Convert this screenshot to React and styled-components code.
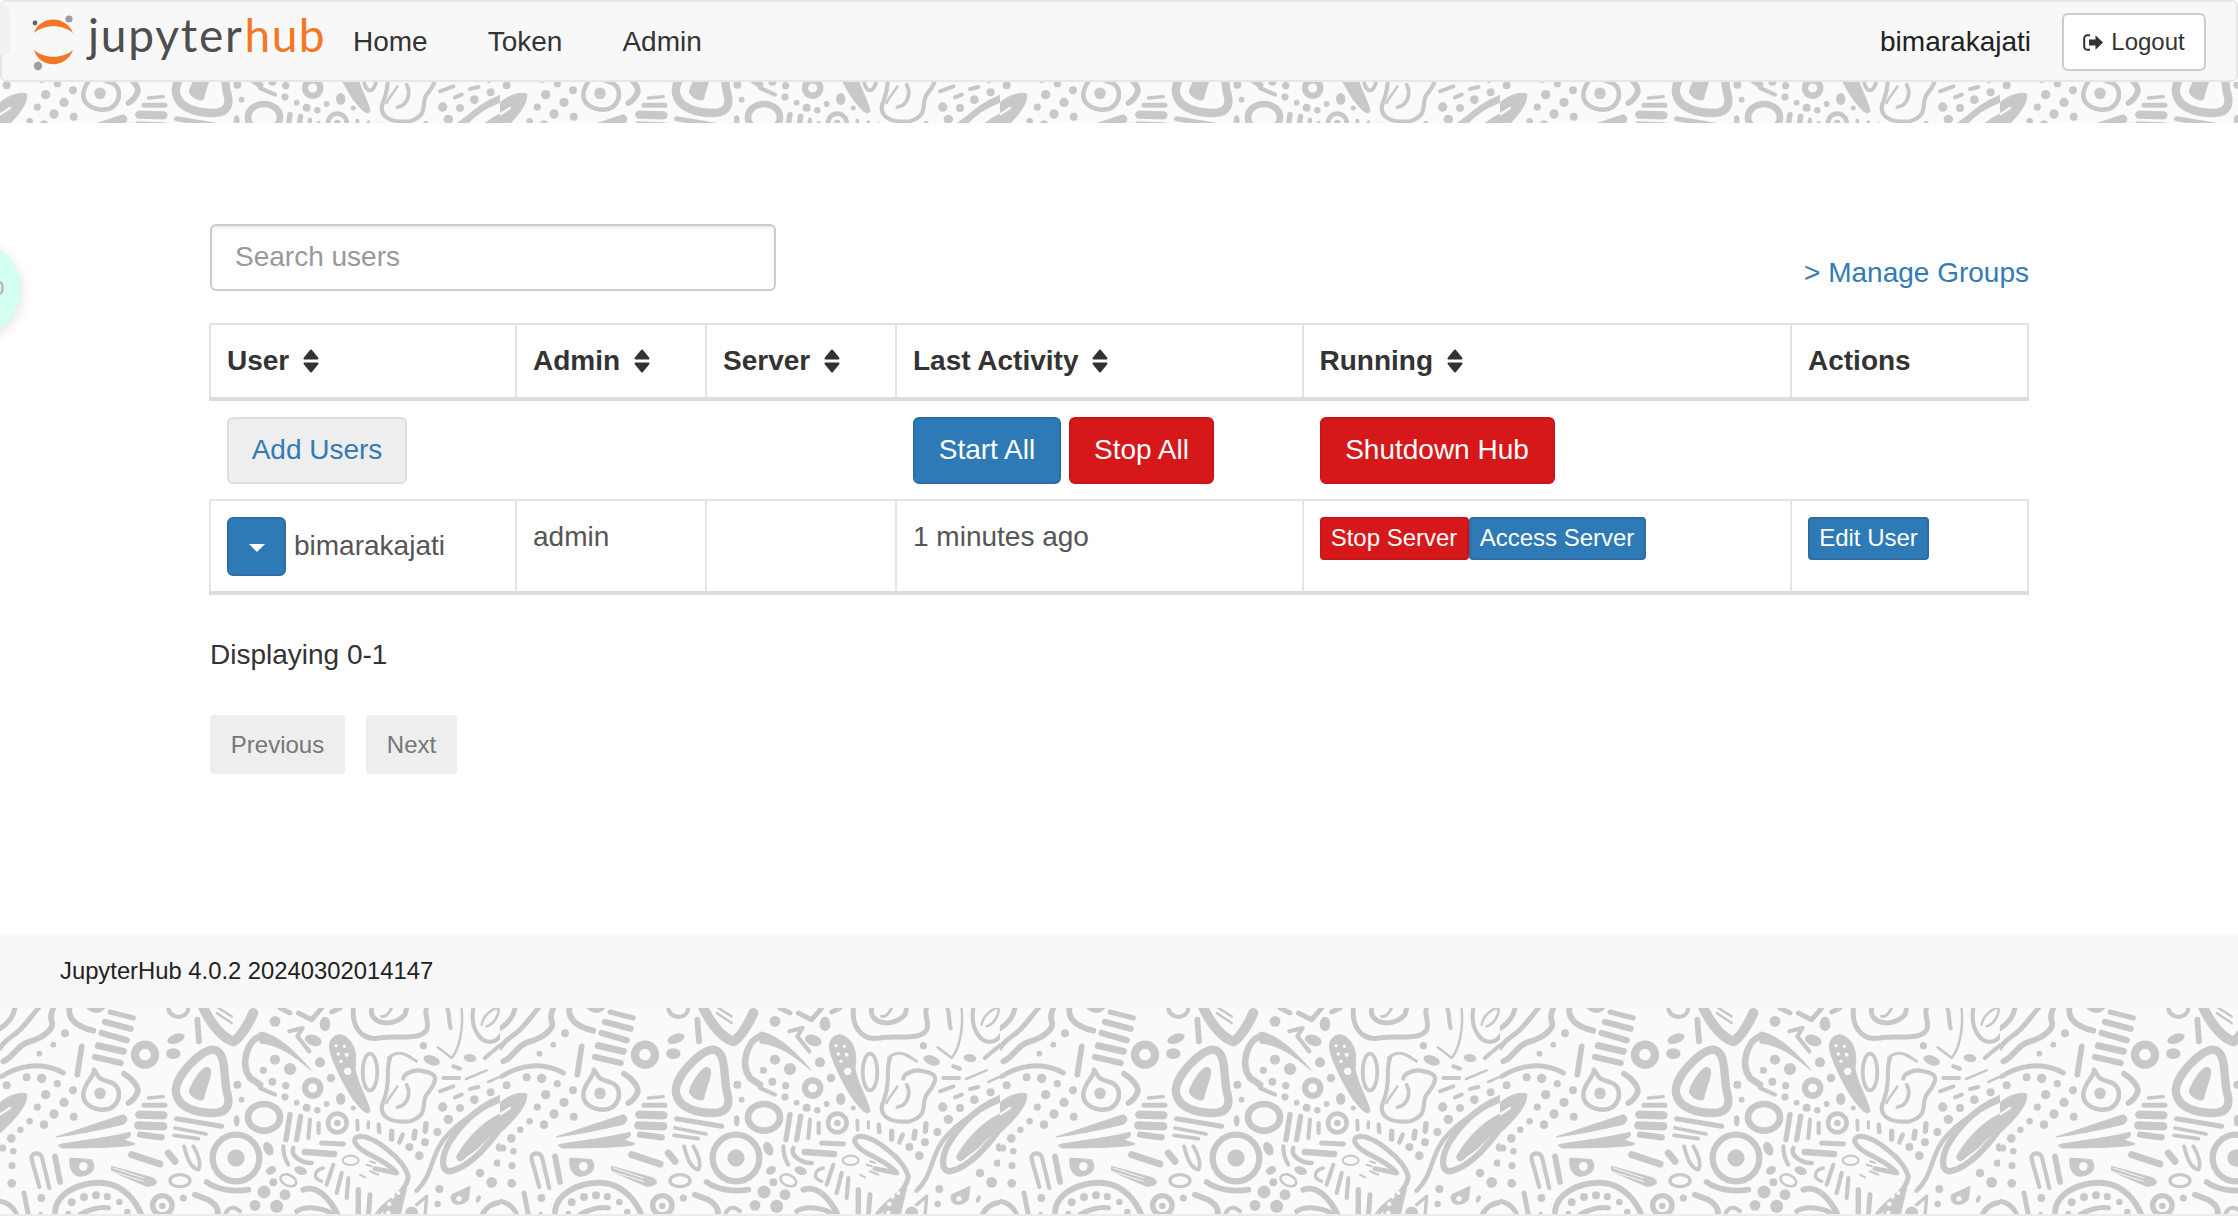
import React from "react";
import styled, { createGlobalStyle } from "styled-components";

const Global = createGlobalStyle`
  html, body { margin: 0; padding: 0; background: #fff; }
  body { font-family: "Liberation Sans", Arial, sans-serif; font-size: 28px; line-height: 39.2px; color: #333; overflow: hidden; }
  * { box-sizing: border-box; }
`;

const GRAY = "#c8c8c6";
const PAPER = "#fbfaf8";
const BOLD = 1.25;
const ROUND = 1.08;

/* ---- pattern tile data, in coordinates of a 3x view: [x1,y1,x2,y2,width] ---- */
const LINES_A = [
  [330,12,400,30,12],[315,42,392,62,15],[305,75,380,97,15],[295,113,370,130,17],[285,147,362,165,15],
  [592,35,597,100,14],[245,115,232,200,14],[445,270,490,266,8],[432,292,495,292,12],[418,320,490,322,20],
  [415,352,490,355,20],[420,380,485,388,15],[530,332,665,355,12],[525,360,618,378,9],[522,382,595,392,9],
  [165,445,180,522,14],[395,440,480,468,17],[505,435,525,460,17],[72,555,85,620,12],[650,15,695,45,6],[655,0,695,25,6],
];
const DOTS_A = [
  [195,76,11],[160,110,8],[118,137,8],[80,208,11],[125,211,13],[172,227,10],[20,232,11],[219,247,11],[137,260,13],
  [192,283,13],[112,297,10],[162,318,13],[221,326,11],[89,340,9],[132,350,12],[61,365,9],[34,391,12],[8,420,10],
  [40,430,9],[36,473,10],[35,526,12],[300,256,16],[712,230,11],[725,275,8],[708,450,24],[550,570,10],[487,594,9],
  [124,570,11],[122,618,6],[765,592,15],[215,583,11],[252,567,11],[288,562,11],[322,566,10],[358,582,9],[382,612,9],[205,617,8],
];
const RINGS_A = [
  [435,140,30,20],[708,450,70,15],[487,592,29,13],
];
const STROKES_A = [
  ["M-5 65C20 50 40 30 45 0",12],["M0 120C20 90 40 85 60 65C80 45 90 30 115 0",12],
  ["M10 160C40 150 50 110 90 100C130 90 165 60 155 40C150 20 155 10 160 0",14],
  ["M208 0C205 30 225 55 280 68",14],["M505 0C505 30 560 40 565 0",10],
  ["M780 85C740 100 720 170 750 210L780 230",16],
  ["M640 125C600 125 520 210 528 255C535 300 590 315 640 315C690 315 690 280 680 250C670 200 680 130 640 125Z",20],
  ["M5 205C60 170 130 160 190 195",12],
  ["M282 185C285 205 250 225 250 260C250 290 280 305 310 305C345 305 362 275 355 245C345 215 310 225 295 205Z",11],
  ["M372 197C395 210 420 240 412 255C405 270 395 280 385 285",14],
  ["M620 522C650 545 700 552 745 545",14],
  ["M118 537L95 455C90 435 115 430 125 445L148 540",10],
  ["M552 415C560 445 570 480 595 485C605 470 595 440 580 415",9],
  ["M0 580C30 585 50 610 50 624",12],
  ["M165 612C170 550 250 520 310 525C370 530 410 580 425 624",14],
  ["M235 624C260 605 300 595 325 600",12],
  ["M585 560L625 575C650 590 660 610 650 624",14],["M675 624C680 600 700 590 720 610",10],
  ["M610 0C640 60 670 90 700 100C720 90 745 50 760 15",24],
];
const FILLS_A = [
  "M260 0C275 15 300 20 315 0Z",
  "M620 178C600 180 570 235 568 250C570 270 610 285 612 270C615 240 650 180 620 178Z",
  "M0 285C20 265 60 250 80 258C85 290 40 340 0 375Z",
  "M168 387L370 320C385 325 385 345 365 350C300 365 230 380 168 387Z",
  "M175 412C180 405 300 395 390 373C395 380 390 390 370 395L405 407C410 415 300 420 185 420Z",
  "M210 450L275 455C290 480 280 500 240 505C220 505 205 480 210 450Z",
  "M335 475L460 510C480 525 465 535 440 535L335 490Z",
];
const ELLIPSES_A = [
  [528,92,25,13,-20],[520,137,20,15,0],[710,338,8,16,0],
];
const OPEN_ELLIPSES_A = [
  [540,518,30,18,8,0],
];
const HOLES_A = [
  ["M-5 322L30 300",7],["M335 490L430 520",3],["M340 480L430 510",3],
];
const HOLE_DOTS_A = [[250,475,13]];

const LINES_B = [
  [60,0,90,15,12],[215,12,240,0,12],[90,320,78,395,13],[122,325,110,395,13],[150,335,145,390,10],[176,345,176,375,10],
  [292,338,293,365,9],[325,342,325,360,8],[356,350,358,372,11],[395,370,395,393,13],[428,380,418,403,11],[465,370,462,390,13],
  [498,347,496,370,13],[580,175,600,182,10],[550,210,597,210,10],[618,213,680,187,6],[540,250,580,235,10],[685,222,775,180,6],
  [630,243,655,237,10],[585,268,605,260,10],[135,432,222,438,16],[185,405,250,408,12],
  [320,470,335,475,5],[330,460,345,465,5],[300,500,315,508,5],[330,490,355,500,5],[220,470,200,530,10],[245,495,230,555,10],
  [265,510,260,570,10],[295,545,295,624,13],[330,560,325,624,12],[0,240,45,260,10],
];
const DOTS_B = [
  [45,40,15],[45,155,14],[90,183,17],[180,163,14],[10,187,10],[37,221,11],[77,233,10],[75,267,10],[213,210,12],[110,284,8],
  [140,299,11],[172,307,9],[200,288,8],[280,300,7],[232,345,9],[532,372,11],[495,403,11],[448,417,11],[478,443,12],[490,113,10],
  [643,275,12],[692,253,11],[740,232,12],[548,297,13],[600,300,11],[565,334,13],[755,390,12],[720,418,12],[712,465,10],[757,475,10],
  [660,495,12],[695,523,15],[755,525,12],[40,523,11],[12,552,18],[75,560,15],[50,595,18],[538,543,11],[533,588,9],[455,615,18],[385,492,4],
];
const RINGS_B = [[158,240,23,15],[232,345,28,11]];
const STROKES_B = [
  ["M115 15L155 35L185 0",12],["M88 70L128 60L112 85L148 130",10],
  ["M280 0C275 50 300 100 360 90C410 80 480 100 500 65C510 40 490 20 500 0",12],
  ["M335 0C325 50 400 60 435 20L440 0",12],["M365 25C380 30 390 10 395 0",7],
  ["M562 0C570 20 565 40 572 60",10],["M605 0C610 60 600 120 575 150L533 118",6],
  ["M640 0C630 60 660 110 700 100C730 90 745 40 755 0",10],["M665 50C670 20 700 0 715 0C720 20 700 50 680 55",6],
  ["M675 150C700 125 730 110 780 60",10],["M730 162C750 150 770 140 780 130",10],
  ["M385 150C420 120 445 145 470 160",7],
  ["M390 150C375 190 395 220 370 280C350 330 400 345 450 340C510 320 480 290 500 260C540 210 530 195 490 190C460 180 430 200 430 212",10],
  ["M440 230C455 260 440 295 412 297",9],["M412 235C400 255 385 270 380 285",6],
  ["M780 255C700 265 620 320 570 400C545 440 540 490 570 490C620 480 690 420 760 300",15],
  ["M470 548C510 510 510 470 535 420C560 370 640 300 780 255",11],
  ["M70 415C70 440 75 455 85 470",10],["M100 420C90 440 120 465 155 465",11],["M190 480C165 485 155 510 185 520",8],
  ["M130 545C170 530 210 570 235 624",14],["M110 610C140 590 200 600 225 624",12],
  ["M350 624C360 590 440 560 445 505C430 450 340 385 300 385C270 390 285 415 320 435C360 455 400 480 410 495L345 482",12],
  ["M470 590L500 565L495 624",8],["M665 624C690 570 760 570 780 624",13],
];
const FILLS_B = [
  "M0 72C40 75 100 120 152 186C110 150 60 110 0 105Z",
  "M240 80C270 85 295 120 285 180C290 220 330 290 330 310C320 325 300 300 280 275C250 230 210 150 208 115C210 90 225 80 240 80Z",
  "M730 315C680 330 620 390 590 445C590 465 610 460 620 445C660 420 710 370 735 320Z",
  "M370 624C370 590 390 560 440 540L420 624Z",
  "M630 535L575 560C565 590 600 600 625 575Z",
];
const ELLIPSES_B = [
  [195,48,15,20,0],[160,97,24,15,20],[242,273,13,17,0],[515,157,24,13,20],[630,150,18,11,10],[25,422,13,20,-25],[33,487,15,11,-30],
  [122,488,18,11,20],[655,573,6,11,20],
];
const OPEN_ELLIPSES_B = [
  [12,328,48,40,16,0],[330,192,22,55,9,0],[272,457,24,14,5,0],[85,517,25,16,6,25],
];
const HOLE_DOTS_B = [[228,113,5],[253,115,5],[235,138,5],[260,140,6],[243,160,5],[263,190,11],[398,565,7],[388,588,7],[415,555,6],[385,615,7],[597,572,8]];

function TileGroup({ lines, dots, rings, strokes, fills, ellipses, openEllipses, holes = [], holeDots = [], dx = 0 }) {
  return (
    <g transform={`translate(${dx} 0)`}>
      {fills.map((d, i) => <path key={i} d={d} fill={GRAY} stroke={GRAY} strokeWidth="3" strokeLinejoin="round" />)}
      {strokes.map(([d, w], i) => <path key={i} d={d} fill="none" stroke={GRAY} strokeWidth={w * BOLD} strokeLinecap="round" strokeLinejoin="round" />)}
      {lines.map(([a, b, c, e, w], i) => <line key={i} x1={a} y1={b} x2={c} y2={e} stroke={GRAY} strokeWidth={w * BOLD} strokeLinecap="round" />)}
      {dots.map(([x, y, r], i) => <circle key={i} cx={x} cy={y} r={r * ROUND} fill={GRAY} />)}
      {rings.map(([x, y, r, w], i) => <circle key={i} cx={x} cy={y} r={r} fill="none" stroke={GRAY} strokeWidth={w * BOLD} />)}
      {ellipses.map(([x, y, a, b, t], i) => <ellipse key={i} cx={x} cy={y} rx={a * ROUND} ry={b * ROUND} fill={GRAY} transform={`rotate(${t} ${x} ${y})`} />)}
      {openEllipses.map(([x, y, a, b, w, t], i) => <ellipse key={i} cx={x} cy={y} rx={a} ry={b} fill="none" stroke={GRAY} strokeWidth={w * BOLD} transform={`rotate(${t} ${x} ${y})`} />)}
      {holes.map(([d, w], i) => <path key={i} d={d} fill="none" stroke={PAPER} strokeWidth={w} strokeLinecap="round" />)}
      {holeDots.map(([x, y, r], i) => <circle key={i} cx={x} cy={y} r={r} fill={PAPER} />)}
    </g>
  );
}

const BandBox = styled.div`
  height: ${(p) => p.$h}px;
  flex: none;
  background: ${PAPER};
  overflow: hidden;
`;
const BandSvg = styled.svg`
  display: block;
  width: 100%;
  height: 100%;
`;

function Band({ id, h, start }) {
  return (
    <BandBox $h={h}>
      <BandSvg aria-hidden="true">
        <defs>
          <pattern id={id} patternUnits="userSpaceOnUse" width="500" height="500" y={-start}>
            <g transform="translate(0 8) scale(0.33333)">
              <TileGroup lines={LINES_A} dots={DOTS_A} rings={RINGS_A} strokes={STROKES_A} fills={FILLS_A} ellipses={ELLIPSES_A} openEllipses={OPEN_ELLIPSES_A} holes={HOLES_A} holeDots={HOLE_DOTS_A} />
              <TileGroup dx={780} lines={LINES_B} dots={DOTS_B} rings={RINGS_B} strokes={STROKES_B} fills={FILLS_B} ellipses={ELLIPSES_B} openEllipses={OPEN_ELLIPSES_B} holeDots={HOLE_DOTS_B} />
            </g>
          </pattern>
        </defs>
        <rect width="100%" height="100%" fill={`url(#${id})`} />
      </BandSvg>
    </BandBox>
  );
}

const Page = styled.div`
  position: relative;
  display: flex;
  flex-direction: column;
  height: 1216px;
  overflow: hidden;
`;

const Navbar = styled.nav`
  flex: none;
  height: 82px;
  display: flex;
  align-items: center;
  background: #f8f8f8;
  border: 2px solid #e7e7e7;
  border-radius: 6px;
  padding: 2px 30px 0 0;
`;
const SideTab = styled.div`
  position: absolute;
  left: 0;
  top: 5px;
  width: 10px;
  height: 50px;
  background: #f1f1f1;
  border-radius: 0 6px 6px 0;
`;
const Brand = styled.a`
  display: flex;
  align-items: center;
  width: 321px;
  flex: none;
  height: 76px;
`;
const LogoMark = styled.svg`
  width: 80px;
  height: 76px;
  flex: none;
`;
const LogoText = styled.span`
  font-family: Lato, "Open Sans", sans-serif;
  font-size: 46px;
  line-height: 46px;
  letter-spacing: 1.8px;
  margin: -15px 0 0 6px;
  color: #4e4e4e;
  white-space: nowrap;
`;
const LogoHub = styled.span`
  color: #f37726;
  letter-spacing: 1.4px;
  margin-left: 1px;
`;
const NavList = styled.div`
  display: flex;
  flex: 1;
  align-items: center;
  padding-left: 30px;
  gap: 60px;
`;
const NavLink = styled.a`
  color: #333;
`;
const UserName = styled.span`
  color: #222;
  margin-right: 31px;
`;
const LogoutButton = styled.button`
  display: flex;
  align-items: center;
  justify-content: center;
  gap: 8px;
  width: 144px;
  height: 58px;
  padding: 0;
  background: #fff;
  border: 2px solid #ccc;
  border-radius: 6px;
  color: #333;
  font: 24px "Liberation Sans", Arial, sans-serif;
`;

const Main = styled.main`
  flex: 1;
  padding: 101px 209px 0 210px;
  background: #fff;
`;
const TopRow = styled.div`
  display: flex;
  justify-content: space-between;
  align-items: flex-end;
`;
const SearchInput = styled.input`
  width: 566px;
  height: 67px;
  padding: 0 23px 2px;
  border: 2px solid #ccc;
  border-radius: 6px;
  box-shadow: inset 0 2px 2px rgba(0,0,0,0.075);
  font: 28px "Liberation Sans", Arial, sans-serif;
  color: #555;
  outline: none;
  &::placeholder { color: #999; opacity: 1; }
`;
const TextLink = styled.a`
  color: #337ab7;
  margin-bottom: -1px;
`;
const Table = styled.table`
  width: 1818px;
  margin: 32px 0 0 -1px;
  border-collapse: collapse;
  table-layout: fixed;
  border: 2px solid #ddd;
  border-bottom-width: 4px;
`;
const Col = styled.col`
  width: ${(p) => p.$w}px;
`;
const Th = styled.th`
  height: 74.5px;
  padding: 0 16px;
  text-align: left;
  vertical-align: middle;
  border: 2px solid #e2e2e2;
  border-bottom: 4px solid #ddd;
  color: #333;
  font-weight: 700;
`;
const ThInner = styled.span`
  display: flex;
  align-items: center;
  gap: 14px;
`;
const Td = styled.td`
  padding: 16px 16px 15px;
  vertical-align: top;
  border: 2px solid #e5e5e5;
  color: #555;
`;
const ActionTd = styled(Td)`
  border-left-color: transparent;
  border-right-color: transparent;
`;
const BtnRow = styled.div`
  display: flex;
  gap: ${(p) => p.$gap || 0}px;
`;
const UserCell = styled.div`
  display: flex;
  align-items: center;
  gap: 8px;
`;
const Btn = styled.button`
  display: inline-flex;
  align-items: center;
  justify-content: center;
  flex: none;
  width: ${(p) => p.$w}px;
  height: ${(p) => (p.$xs ? 43 : p.$h || 67)}px;
  padding: 0;
  border-radius: ${(p) => (p.$xs ? 4 : 6)}px;
  border: 2px solid ${(p) => ({ blue: "#2e6da4", red: "#c9151a", gray: "#dedede" }[p.$kind])};
  background: ${(p) => ({ blue: "#2e7ab6", red: "#d7181b", gray: "#eeeeee" }[p.$kind])};
  color: ${(p) => (p.$kind === "gray" ? "#337ab7" : "#fff")};
  font: ${(p) => (p.$xs ? 24 : 28)}px "Liberation Sans", Arial, sans-serif;
`;
const Caret = styled.span`
  width: 0;
  height: 0;
  margin-top: 4px;
  border-left: 8px solid transparent;
  border-right: 8px solid transparent;
  border-top: 8px solid #fff;
`;
const Displaying = styled.p`
  margin: 40px 0 41px;
  color: #333;
`;
const Pager = styled.div`
  display: flex;
  gap: 21px;
`;
const PageBtn = styled.span`
  display: flex;
  align-items: center;
  justify-content: center;
  width: ${(p) => p.$w}px;
  height: 59px;
  background: #eee;
  border-radius: 4px;
  color: #777;
  font-size: 24px;
`;
const Footer = styled.footer`
  flex: none;
  height: 74px;
  display: flex;
  align-items: center;
  padding-left: 60px;
  background: #f7f7f7;
  color: #222;
  font-size: 23.8px;
`;
const BottomLine = styled.div`
  flex: none;
  height: 2px;
  background: #ececec;
`;
const Bubble = styled.div`
  position: absolute;
  left: -76px;
  top: 240px;
  width: 97px;
  height: 97px;
  border-radius: 50%;
  background: #d3fff0;
  box-shadow: 0 4px 14px rgba(0,0,0,0.12);
  display: flex;
  align-items: center;
  justify-content: flex-end;
  padding-right: 17px;
  color: #aaa;
  font-size: 20px;
`;

const SortIcon = () => (
  <svg width="16" height="24" viewBox="0 0 16 24" aria-hidden="true">
    <path d="M8 1.5L14.5 9.5H1.5Z M1.5 14.5H14.5L8 22.5Z" fill="#333" stroke="#333" strokeWidth="2" strokeLinejoin="round" />
  </svg>
);
const LogoutIcon = () => (
  <svg width="20" height="17" viewBox="0 0 20 17" aria-hidden="true">
    <path d="M7 1.2H4.5A3.2 3.2 0 0 0 1.2 4.5v8a3.2 3.2 0 0 0 3.3 3.3H7" fill="none" stroke="#333" strokeWidth="2" />
    <path d="M6 5.5h6.5V1.2L20 8.5l-7.5 7.3v-4.3H6z" fill="#333" />
  </svg>
);

export default function App() {
  return (
    <Page>
      <Global />
      <Navbar>
        <Brand>
          <LogoMark viewBox="0 0 80 76" aria-hidden="true">
            <path d="M32 29C38 11 64 11 71 29C61 20 42 20 32 29Z" fill="#f37726" />
            <path d="M32 46C42 55 61 55 71 46C64 65 38 65 32 46Z" fill="#f37726" />
            <circle cx="67" cy="15" r="3.6" fill="#9e9e9e" />
            <circle cx="33" cy="19" r="2.4" fill="#616262" />
            <circle cx="36" cy="62" r="4.2" fill="#9e9e9e" />
          </LogoMark>
          <LogoText>jupyter<LogoHub>hub</LogoHub></LogoText>
        </Brand>
        <NavList>
          <NavLink>Home</NavLink>
          <NavLink>Token</NavLink>
          <NavLink>Admin</NavLink>
        </NavList>
        <UserName>bimarakajati</UserName>
        <LogoutButton><LogoutIcon />Logout</LogoutButton>
      </Navbar>
      <SideTab />
      <Band id="band-top" h={41} start={82} />
      <Main>
        <TopRow>
          <SearchInput placeholder="Search users" readOnly />
          <TextLink>&gt; Manage Groups</TextLink>
        </TopRow>
        <Table>
          <colgroup>
            <Col $w={306} /><Col $w={190} /><Col $w={190} /><Col $w={406.5} /><Col $w={488.5} /><Col $w={237} />
          </colgroup>
          <thead>
            <tr>
              <Th><ThInner>User <SortIcon /></ThInner></Th>
              <Th><ThInner>Admin <SortIcon /></ThInner></Th>
              <Th><ThInner>Server <SortIcon /></ThInner></Th>
              <Th><ThInner>Last Activity <SortIcon /></ThInner></Th>
              <Th><ThInner>Running <SortIcon /></ThInner></Th>
              <Th>Actions</Th>
            </tr>
          </thead>
          <tbody>
            <tr>
              <ActionTd><Btn $kind="gray" $w={180}>Add Users</Btn></ActionTd>
              <ActionTd />
              <ActionTd />
              <ActionTd>
                <BtnRow $gap={8}>
                  <Btn $kind="blue" $w={148}>Start All</Btn>
                  <Btn $kind="red" $w={145}>Stop All</Btn>
                </BtnRow>
              </ActionTd>
              <ActionTd><Btn $kind="red" $w={235}>Shutdown Hub</Btn></ActionTd>
              <ActionTd />
            </tr>
            <tr>
              <Td>
                <UserCell>
                  <Btn $kind="blue" $w={59} $h={59}><Caret /></Btn>
                  bimarakajati
                </UserCell>
              </Td>
              <Td>admin</Td>
              <Td />
              <Td>1 minutes ago</Td>
              <Td>
                <BtnRow>
                  <Btn $kind="red" $xs $w={149}>Stop Server</Btn>
                  <Btn $kind="blue" $xs $w={177}>Access Server</Btn>
                </BtnRow>
              </Td>
              <Td><Btn $kind="blue" $xs $w={121}>Edit User</Btn></Td>
            </tr>
          </tbody>
        </Table>
        <Displaying>Displaying 0-1</Displaying>
        <Pager>
          <PageBtn $w={135}>Previous</PageBtn>
          <PageBtn $w={91}>Next</PageBtn>
        </Pager>
      </Main>
      <Footer>JupyterHub 4.0.2 20240302014147</Footer>
      <Band id="band-bottom" h={206} start={8} />
      <BottomLine />
      <Bubble>0</Bubble>
    </Page>
  );
}
